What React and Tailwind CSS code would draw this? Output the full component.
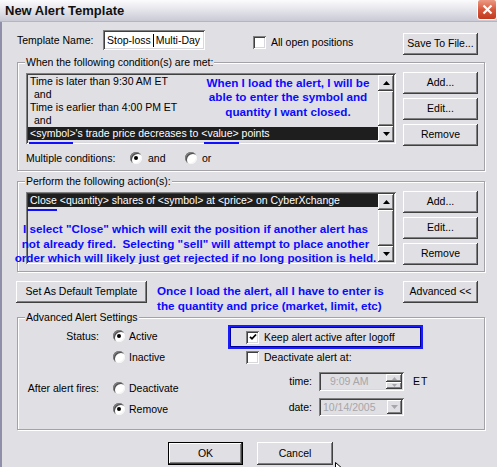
import React from 'react'

const RAISED =
  'bg-[#e0dfe3] shadow-[inset_-1px_-1px_0_#404040,inset_1px_1px_0_#ffffff,inset_-2px_-2px_0_#808080]'
const SUNKEN =
  'shadow-[inset_1px_1px_0_#808080,inset_-1px_-1px_0_#ffffff,inset_2px_2px_0_#404040,inset_-2px_-2px_0_#d8d7dc]'
const NOTE = 'font-bold text-[11.7px] text-[#0b0bff] whitespace-nowrap'

const conditions = [
  { text: 'Time is later than 9:30 AM ET' },
  { text: 'and', indent: true },
  { text: 'Time is earlier than 4:00 PM ET' },
  { text: 'and', indent: true },
  { text: "<symbol>'s trade price decreases to <value> points", selected: true },
]

const actions = [
  { text: 'Close <quantity> shares of <symbol> at <price> on CyberXchange', selected: true },
]

function Arrow({ dir = 'up', color = '#000', w = 7, h = 4 }) {
  return (
    <svg width={w} height={h} viewBox={`0 0 ${w} ${h}`}>
      <path
        d={dir === 'up' ? `M0 ${h}H${w}L${w / 2} 0z` : `M0 0H${w}L${w / 2} ${h}z`}
        fill={color}
      />
    </svg>
  )
}

function Button({ className = '', children }) {
  return (
    <button
      type="button"
      className={`flex h-[22px] w-[75px] shrink-0 items-center justify-center pb-[1px] ${RAISED} ${className}`}
    >
      {children}
    </button>
  )
}

function Radio({ checked }) {
  return (
    <span className="flex h-[12px] w-[12px] shrink-0 items-center justify-center rounded-full bg-white shadow-[inset_1px_1px_0_#808080,inset_-1px_-1px_0_#f4f4f4,inset_2px_2px_0_#505050]">
      {checked ? <span className="h-[4px] w-[4px] rounded-full bg-black" /> : null}
    </span>
  )
}

function CheckBox({ checked }) {
  return (
    <span className={`flex h-[13px] w-[13px] shrink-0 items-center justify-center bg-white ${SUNKEN}`}>
      {checked ? (
        <svg width="8" height="8" viewBox="0 0 8 8">
          <path d="M1 3.8L3 5.8L7 1.5" fill="none" stroke="#000" strokeWidth="1.8" />
        </svg>
      ) : null}
    </span>
  )
}

function ScrollBar() {
  return (
    <div className="flex w-[16px] shrink-0 flex-col">
      <div className={`flex h-[16px] items-center justify-center ${RAISED}`}>
        <Arrow dir="up" />
      </div>
      <div className={`flex-1 ${RAISED}`} />
      <div className={`flex h-[16px] items-center justify-center ${RAISED}`}>
        <Arrow dir="down" />
      </div>
    </div>
  )
}

function ListBox({ rows, className = '', children }) {
  return (
    <div className={`relative flex w-[370px] shrink-0 bg-[#e0dfe3] p-[2px] ${SUNKEN} ${className}`}>
      <div className="min-w-0 flex-1 overflow-hidden">
        {rows.map((r, i) => (
          <div
            key={i}
            className={`h-[13px] whitespace-nowrap leading-[13px] ${r.indent ? 'pl-[6px]' : 'pl-[2px]'} ${
              r.selected ? 'bg-[#1e1e1e] text-white' : ''
            }`}
          >
            {r.text}
          </div>
        ))}
      </div>
      <ScrollBar />
      {children}
    </div>
  )
}

function Group({ title, className = '', children }) {
  return (
    <div
      className={`relative shrink-0 border border-[#a3a2a8] shadow-[inset_1px_1px_0_#ffffff,1px_1px_0_#ffffff] ${className}`}
    >
      <span className="absolute -top-[7px] left-[7px] bg-[#e0dfe3] px-[1px] leading-[13px]">{title}</span>
      {children}
    </div>
  )
}

function SideButtons() {
  return (
    <div className="ml-[7px] flex flex-col gap-[4px]">
      <Button>Add...</Button>
      <Button>Edit...</Button>
      <Button>Remove</Button>
    </div>
  )
}

function RadioRow({ label, text, checked, className = '' }) {
  return (
    <div className={`flex h-[14px] items-center ${className}`}>
      <span className="w-[81px] shrink-0 text-right">{label}</span>
      <span className="ml-[14px]">
        <Radio checked={checked} />
      </span>
      <span className="ml-[4px]">{text}</span>
    </div>
  )
}

function TitleBar() {
  return (
    <div className="flex h-[22px] items-center justify-between border-b border-[#b4b4c4] bg-gradient-to-b from-[#fbfbfd] via-[#e3e3ea] to-[#cacad6] pl-[5px]">
      <span className="text-[13px] font-bold leading-[16px] text-[#111]">New Alert Template</span>
      <div className="-mt-[3px] flex h-[21px] w-[20px] items-center justify-center rounded-[3px] border border-white bg-gradient-to-b from-[#eb9a84] via-[#d8573b] to-[#c03a20]">
        <svg width="11" height="11" viewBox="0 0 11 11">
          <path d="M1.5 1.5l8 8M9.5 1.5l-8 8" stroke="#fff" strokeWidth="2.2" />
        </svg>
      </div>
    </div>
  )
}

export default function App() {
  return (
    <div className="relative h-[467px] w-[497px] overflow-hidden bg-[#e0dfe3] font-['Liberation_Sans',Arial,sans-serif] text-[10.5px] leading-[13px] text-black">
      <TitleBar />
      <div className="flex h-[445px] flex-col border-l-2 border-[#8f8faa] pl-[15px] pr-[12px] pt-[8px]">
        <div className="flex h-[25px] shrink-0 items-start">
          <span className="mt-[4px] w-[86px] shrink-0">Template Name:</span>
          <div className={`flex h-[20px] w-[102px] shrink-0 items-center bg-white pl-[4px] ${SUNKEN}`}>
            <span>Stop-loss</span>
            <span className="ml-[2px] mr-[2px] h-[13px] w-[1px] bg-black" />
            <span>Multi-Day</span>
          </div>
          <label className="ml-[48px] mt-[6px] flex items-center">
            <CheckBox />
            <span className="ml-[5px]">All open positions</span>
          </label>
          <Button className="ml-auto mr-[7px] mt-[3px]">Save To File...</Button>
        </div>

        <Group
          title="When the following condition(s) are met:"
          className="mt-[7px] h-[109px] pl-[8px] pr-[6px] pt-[9px]"
        >
          <div className="flex items-start">
            <ListBox rows={conditions} className="mt-[1px] h-[71px]">
              <div className={`absolute left-[150px] top-[3px] w-[224px] text-center leading-[14.3px] ${NOTE}`}>
                When I load the alert, I will be
                <br />
                able to enter the symbol and
                <br />
                quantity I want closed.
              </div>
              <span className="absolute left-[3px] top-[69px] h-[2px] w-[44px] bg-[#1010ff]" />
              <span className="absolute left-[178px] top-[69px] h-[2px] w-[35px] bg-[#1010ff]" />
            </ListBox>
            <SideButtons />
          </div>
          <div className="mt-[5px] flex h-[14px] items-center">
            <span className="w-[104px] shrink-0">Multiple conditions:</span>
            <Radio checked />
            <span className="ml-[6px] w-[37px]">and</span>
            <Radio />
            <span className="ml-[5px]">or</span>
          </div>
        </Group>

        <Group
          title="Perform the following action(s):"
          className="mt-[10px] h-[91px] pl-[8px] pr-[6px] pt-[9px]"
        >
          <div className="flex items-start">
            <ListBox rows={actions} className="mt-[1px] h-[72px]">
              <span className="absolute left-[1px] top-[17px] h-[2px] w-[30px] bg-[#1010ff]" />
              <div className={`absolute -left-[31px] top-[30px] w-[401px] text-center leading-[14.5px] ${NOTE}`}>
                I select "Close" which will exit the position if another alert has
                <br />
                not already fired.&nbsp; Selecting "sell" will attempt to place another
                <br />
                order which will likely just get rejected if no long position is held.
              </div>
            </ListBox>
            <SideButtons />
          </div>
        </Group>

        <div className="mt-[9px] flex h-[22px] shrink-0 items-start">
          <Button className="-ml-[1px] w-[131px]">Set As Default Template</Button>
          <div className={`ml-[10px] mt-[2px] leading-[15px] ${NOTE}`}>
            Once I load the alert, all I have to enter is
            <br />
            the quantity and price (market, limit, etc)
          </div>
          <Button className="ml-auto mr-[7px]">Advanced &lt;&lt;</Button>
        </div>

        <Group title="Advanced Alert Settings" className="mt-[14px] flex h-[113px]">
          <div className="w-[210px] shrink-0 pt-[11px]">
            <RadioRow label="Status:" text="Active" checked />
            <RadioRow label="" text="Inactive" className="mt-[7px]" />
            <RadioRow label="After alert fires:" text="Deactivate" className="mt-[17px]" />
            <RadioRow label="" text="Remove" checked className="mt-[7px]" />
          </div>
          <div className="pt-[7px]">
            <div className="flex h-[24px] w-[195px] items-center border-2 border-[#1a1aff] pl-[16px] shadow-[inset_0_0_0_1px_#0000a0]">
              <CheckBox checked />
              <span className="ml-[5px]">Keep alert active after logoff</span>
            </div>
            <div className="mt-[2px] flex h-[13px] items-center pl-[18px]">
              <CheckBox />
              <span className="ml-[5px]">Deactivate alert at:</span>
            </div>
            <div className="mt-[8px] flex h-[19px] items-center">
              <span className="w-[84px] shrink-0 text-right">time:</span>
              <div className={`ml-[7px] flex h-[19px] w-[85px] items-center pl-[11px] pr-[2px] text-[#a7a6aa] ${SUNKEN}`}>
                <span className="flex-1">9:09 AM</span>
                <div className="flex flex-col">
                  <div className={`flex h-[8px] w-[16px] items-center justify-center ${RAISED}`}>
                    <Arrow dir="up" color="#a7a6aa" w={5} h={3} />
                  </div>
                  <div className={`flex h-[7px] w-[16px] items-center justify-center ${RAISED}`}>
                    <Arrow dir="down" color="#a7a6aa" w={5} h={3} />
                  </div>
                </div>
              </div>
              <span className="ml-[9px] tracking-[1px]">ET</span>
            </div>
            <div className="mt-[7px] flex h-[18px] items-center">
              <span className="w-[84px] shrink-0 text-right">date:</span>
              <div className={`ml-[7px] flex h-[18px] w-[85px] items-center pl-[4px] pr-[2px] text-[#a7a6aa] ${SUNKEN}`}>
                <span className="flex-1">10/14/2005</span>
                <div className={`flex h-[14px] w-[15px] items-center justify-center ${RAISED}`}>
                  <Arrow dir="down" color="#a7a6aa" />
                </div>
              </div>
            </div>
          </div>
        </Group>

        <div className="mt-[12px] flex shrink-0">
          <button
            type="button"
            className="ml-[151px] flex h-[23px] w-[75px] items-center justify-center bg-[#e0dfe3] shadow-[inset_0_0_0_1px_#000000,inset_-2px_-2px_0_#404040,inset_2px_2px_0_#ffffff,inset_-3px_-3px_0_#808080]"
          >
            OK
          </button>
          <Button className="ml-[14px] h-[23px] w-[76px]">Cancel</Button>
        </div>
      </div>

      <svg className="absolute left-[335px] top-[462px]" width="12" height="19" viewBox="0 0 12 19">
        <path d="M0.5 0.5v15l4-4 2.5 6 2-1-2.5-6h5.5z" fill="#fff" stroke="#000" />
      </svg>
    </div>
  )
}
